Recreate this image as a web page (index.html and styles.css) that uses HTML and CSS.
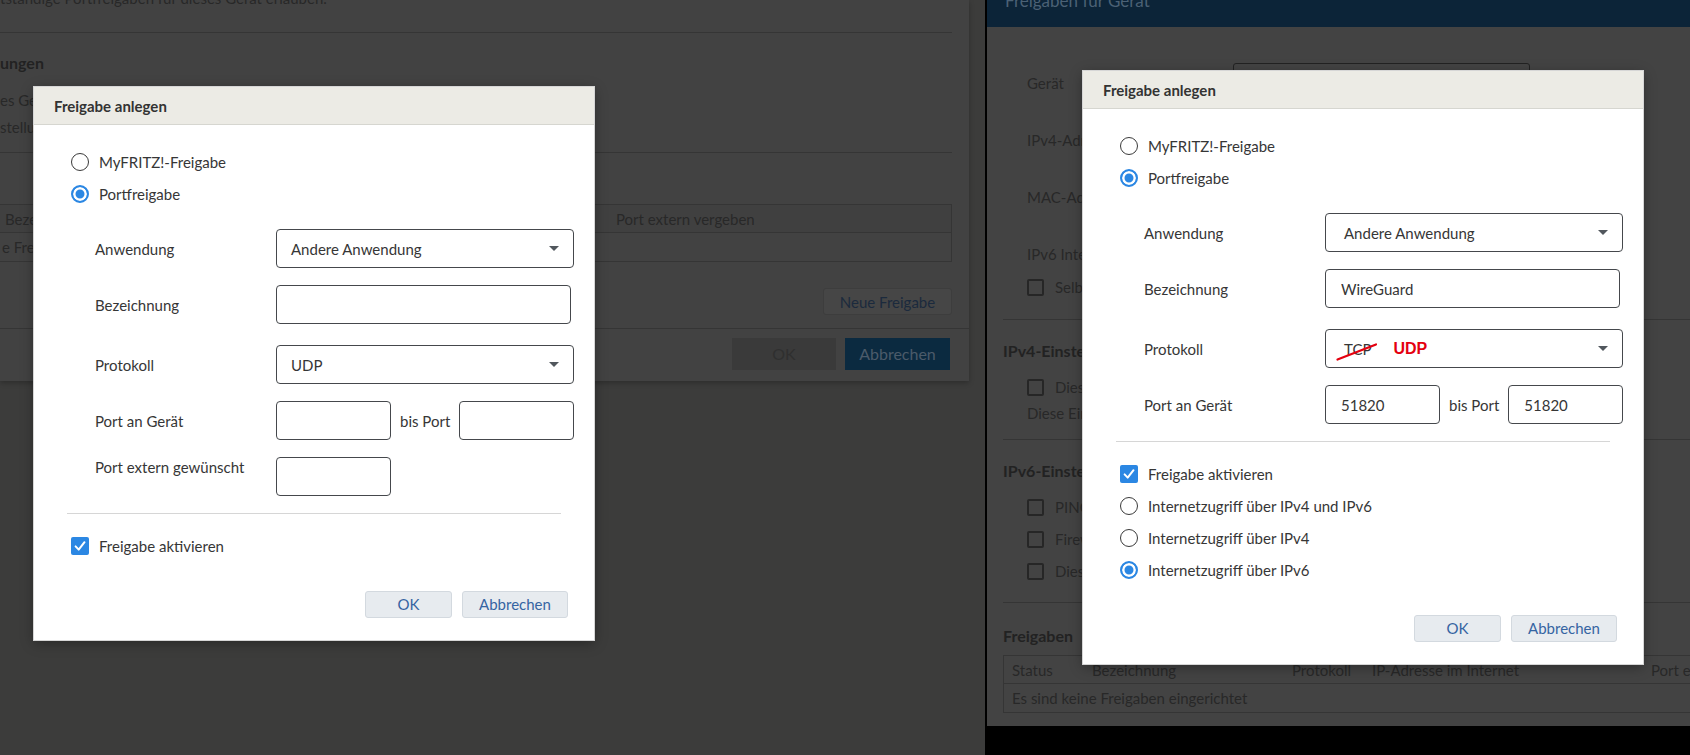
FILE: index.html
```html
<!DOCTYPE html>
<html lang="de">
<head>
<meta charset="utf-8">
<title>Freigaben für Gerät</title>
<link rel="stylesheet" href="styles.css">
</head>
<body>
<main class="screen">

  <!-- Older interface: port sharing page with the create dialog on top -->
  <section class="pane pane-old">
    <div class="page page-old">
      <p class="old-lead">tständige Portfreigaben für dieses Gerät erlauben.</p>
      <hr class="rule rule-lead">
      <h3 class="old-head">ungen</h3>
      <p class="old-line old-line-1">es Gerät komplett freigeben</p>
      <p class="old-line old-line-2">stellung gilt für IPv4.</p>
      <hr class="rule rule-mid">
      <div class="old-table">
        <div class="old-row old-row-head">
          <span class="old-cell old-cell-name">Bezeichnung</span>
          <span class="old-cell">Port extern vergeben</span>
        </div>
        <div class="old-row">
          <span class="old-cell old-cell-empty">e Freigaben</span>
        </div>
      </div>
      <div class="old-actions"><button class="old-btn-new" type="button">Neue Freigabe</button></div>
      <footer class="old-footer">
        <button class="old-btn-ok" type="button">OK</button>
        <button class="old-btn-cancel" type="button">Abbrechen</button>
      </footer>
    </div>

    <div class="dialog dialog-old">
      <div class="dialog-head">Freigabe anlegen</div>
      <div class="dialog-body">
        <div class="options">
          <label class="option"><span class="radio"></span>MyFRITZ!-Freigabe</label>
          <label class="option"><span class="radio is-on"></span>Portfreigabe</label>
        </div>
        <div class="fields">
          <div class="field">
            <span class="field-label">Anwendung</span>
            <div class="select"><span>Andere Anwendung</span><span class="caret"></span></div>
          </div>
          <div class="field field-name">
            <span class="field-label">Bezeichnung</span>
            <input class="input input-wide" type="text" value="">
          </div>
          <div class="field">
            <span class="field-label">Protokoll</span>
            <div class="select"><span>UDP</span><span class="caret"></span></div>
          </div>
          <div class="field">
            <span class="field-label">Port an Gerät</span>
            <input class="input input-port" type="text" value="">
            <span class="bis">bis Port</span>
            <input class="input input-port" type="text" value="">
          </div>
          <div class="field field-top">
            <span class="field-label">Port extern gewünscht</span>
            <input class="input input-port" type="text" value="">
          </div>
        </div>
        <hr class="dialog-rule">
        <div class="options options-after">
          <label class="option"><span class="check"><svg viewBox="0 0 18 18" width="18" height="18"><path d="M4.6 9.4l3.1 3.2 5.8-7.4" fill="none" stroke="#fff" stroke-width="2" stroke-linecap="round" stroke-linejoin="round"/></svg></span>Freigabe aktivieren</label>
        </div>
        <div class="dialog-buttons">
          <button class="btn btn-ok" type="button">OK</button>
          <button class="btn btn-cancel" type="button">Abbrechen</button>
        </div>
      </div>
    </div>
  </section>

  <!-- Newer interface: device sharing page with the create dialog on top -->
  <section class="pane pane-new">
    <div class="page page-new">
      <header class="page-bar"><h2 class="page-title">Freigaben für Gerät</h2></header>
      <div class="page-body">
        <div class="form-row form-row-first"><span class="form-label">Gerät</span><div class="bg-select"></div></div>
        <div class="form-row"><span class="form-label">IPv4-Adresse</span></div>
        <div class="form-row"><span class="form-label">MAC-Adresse</span></div>
        <div class="form-row"><span class="form-label">IPv6 Interface-ID</span></div>
        <div class="bg-check bg-check-self"><span class="bg-box"></span>Selbstständige Portfreigaben</div>
        <hr class="rule rule-new rule-a">
        <h3 class="bg-head bg-head-v4">IPv4-Einstellungen</h3>
        <div class="bg-check bg-check-v4"><span class="bg-box"></span>Dieses Gerät freigeben</div>
        <p class="bg-note">Diese Einstellung gilt für IPv4.</p>
        <hr class="rule rule-new rule-b">
        <h3 class="bg-head bg-head-v6">IPv6-Einstellungen</h3>
        <div class="bg-check bg-check-ping"><span class="bg-box"></span>PING6 freigeben</div>
        <div class="bg-check bg-check-next"><span class="bg-box"></span>Firewall öffnen</div>
        <div class="bg-check bg-check-next"><span class="bg-box"></span>Dieses Gerät freigeben</div>
        <hr class="rule rule-new rule-c">
        <h3 class="bg-head bg-head-list">Freigaben</h3>
        <div class="bg-table">
          <div class="bg-row bg-row-head">
            <span class="bg-cell">Status</span>
            <span class="bg-cell">Bezeichnung</span>
            <span class="bg-cell">Protokoll</span>
            <span class="bg-cell">IP-Adresse im Internet</span>
            <span class="bg-cell">Port extern</span>
          </div>
          <div class="bg-row bg-row-empty">
            <span class="bg-cell">Es sind keine Freigaben eingerichtet</span>
          </div>
        </div>
      </div>
    </div>

    <div class="dialog dialog-new">
      <div class="dialog-head">Freigabe anlegen</div>
      <div class="dialog-body">
        <div class="options">
          <label class="option"><span class="radio"></span>MyFRITZ!-Freigabe</label>
          <label class="option"><span class="radio is-on"></span>Portfreigabe</label>
        </div>
        <div class="fields">
          <div class="field">
            <span class="field-label">Anwendung</span>
            <div class="select"><span>Andere Anwendung</span><span class="caret"></span></div>
          </div>
          <div class="field field-name">
            <span class="field-label">Bezeichnung</span>
            <input class="input input-wide" type="text" value="WireGuard">
          </div>
          <div class="field">
            <span class="field-label">Protokoll</span>
            <div class="select">
              <span class="proto-old">TCP<svg class="strike" viewBox="0 0 42 20" width="42" height="20"><path d="M1.5 17.5 C 14 12.5, 27 7.5, 40 2.5" fill="none" stroke="#e4000f" stroke-width="2.2" stroke-linecap="round"/></svg></span>
              <span class="proto-new">UDP</span>
              <span class="caret"></span>
            </div>
          </div>
          <div class="field">
            <span class="field-label">Port an Gerät</span>
            <input class="input input-port" type="text" value="51820">
            <span class="bis">bis Port</span>
            <input class="input input-port" type="text" value="51820">
          </div>
        </div>
        <hr class="dialog-rule">
        <div class="options options-after">
          <label class="option"><span class="check"><svg viewBox="0 0 18 18" width="18" height="18"><path d="M4.6 9.4l3.1 3.2 5.8-7.4" fill="none" stroke="#fff" stroke-width="2" stroke-linecap="round" stroke-linejoin="round"/></svg></span>Freigabe aktivieren</label>
          <label class="option"><span class="radio"></span>Internetzugriff über IPv4 und IPv6</label>
          <label class="option"><span class="radio"></span>Internetzugriff über IPv4</label>
          <label class="option"><span class="radio is-on"></span>Internetzugriff über IPv6</label>
        </div>
        <div class="dialog-buttons">
          <button class="btn btn-ok" type="button">OK</button>
          <button class="btn btn-cancel" type="button">Abbrechen</button>
        </div>
      </div>
    </div>
  </section>

</main>
</body>
</html>
```

FILE: styles.css
```css
* {
  box-sizing: border-box;
}

html,
body {
  margin: 0;
  height: 100%;
}

body {
  background: #000;
  font-family: Lato, "Open Sans", sans-serif;
  font-size: 15px;
  line-height: 20px;
  color: #363636;
}

button,
input {
  font: inherit;
}

.screen {
  display: flex;
  width: 1690px;
  height: 755px;
  overflow: hidden;
}

.pane {
  position: relative;
  height: 755px;
  overflow: hidden;
}

.pane-old {
  width: 985px;
  flex: none;
  background: #3c3c3b;
}

.pane-new {
  flex: 1;
  background: #000;
}

/* ---------- dimmed page behind the left dialog ---------- */

.page-old {
  width: 969px;
  height: 381px;
  background: #424242;
  color: #282828;
  box-shadow: 0 2px 5px rgba(0, 0, 0, 0.25);
  display: flex;
  flex-direction: column;
  overflow: hidden;
}

.old-lead {
  margin: -12px 0 0;
  white-space: nowrap;
}

.rule {
  border: 0;
  border-top: 1px solid #353535;
  margin: 0;
  height: 0;
}

.rule-lead {
  margin: 24px 17px 0 0;
}

.old-head {
  margin: 20px 0 0;
  font-size: 16px;
  line-height: 20px;
  font-weight: 700;
  color: #222;
}

.old-line {
  margin: 0;
  white-space: nowrap;
}

.old-line-1 {
  margin-top: 17px;
}

.old-line-2 {
  margin-top: 7px;
}

.rule-mid {
  margin: 15px 17px 0 0;
}

.old-table {
  margin: 51px 17px 0 -1px;
  border: 1px solid #353535;
}

.old-row {
  display: grid;
  grid-template-columns: 607px 1fr;
  height: 28px;
  line-height: 28px;
}

.old-row-head {
  border-bottom: 1px solid #353535;
  background: #404040;
}

.old-cell {
  padding: 0 9px;
  white-space: nowrap;
}

.old-cell-name {
  padding-left: 5px;
}

.old-cell-empty {
  padding-left: 2px;
}

.old-actions {
  display: flex;
  justify-content: flex-end;
  margin: 26px 17px 0 0;
}

.old-btn-new {
  width: 129px;
  height: 27px;
  border: 1px solid #3d3d3d;
  border-radius: 3px;
  background: #464646;
  color: #1b2a3d;
  padding: 0;
}

.old-footer {
  display: flex;
  justify-content: flex-end;
  gap: 9px;
  margin-top: 13px;
  padding: 9px 19px 0 0;
  border-top: 1px solid #353535;
}

.old-btn-ok,
.old-btn-cancel {
  height: 32px;
  border: 0;
  padding: 0;
  font-size: 16px;
}

.old-btn-ok {
  width: 104px;
  background: #3a3a3a;
  color: #2f2f2f;
}

.old-btn-cancel {
  width: 105px;
  background: #0b2a40;
  color: #4b5b6a;
}

/* ---------- dimmed page behind the right dialog ---------- */

.page-new {
  margin-left: 2px;
  height: 726px;
  background: #434343;
  color: #282828;
  overflow: hidden;
  box-shadow: -1px 0 4px rgba(0, 0, 0, 0.4);
}

.page-bar {
  height: 27px;
  background: #0c2438;
  overflow: hidden;
}

.page-title {
  margin: -9px 0 0 18px;
  font-size: 17px;
  line-height: 20px;
  font-weight: 400;
  color: #4b6175;
  white-space: nowrap;
}

.page-body {
  padding-left: 16px;
}

.form-row {
  display: flex;
  align-items: center;
  height: 39px;
  margin-top: 18px;
  padding-left: 24px;
}

.form-row-first {
  margin-top: 36px;
}

.form-label {
  width: 206px;
  flex: none;
  white-space: nowrap;
}

.bg-select {
  width: 297px;
  height: 39px;
  border: 1px solid #222;
  border-radius: 3px;
}

.bg-check {
  display: flex;
  align-items: center;
  gap: 11px;
  height: 20px;
  padding-left: 24px;
  white-space: nowrap;
}

.bg-box {
  width: 17px;
  height: 17px;
  flex: none;
  border: 2px solid #262626;
  border-radius: 2px;
}

.bg-check-self {
  margin-top: 4px;
}

.rule-a {
  margin-top: 22px;
}

.bg-head {
  margin: 21px 0 0;
  font-size: 16px;
  line-height: 20px;
  font-weight: 700;
  color: #222;
  white-space: nowrap;
}

.bg-check-v4 {
  margin-top: 16px;
}

.bg-note {
  margin: 6px 0 0;
  padding-left: 24px;
  white-space: nowrap;
}

.rule-b {
  margin-top: 16px;
}

.bg-check-ping {
  margin-top: 16px;
}

.bg-check-next {
  margin-top: 12px;
}

.rule-c {
  margin-top: 21px;
}

.bg-head-list {
  margin-top: 23px;
}

.bg-table {
  margin-top: 9px;
  width: 760px;
  border: 1px solid #353535;
}

.bg-row {
  display: grid;
  grid-template-columns: 80px 200px 80px 279px 1fr;
  height: 28px;
  line-height: 28px;
}

.bg-row-head {
  border-bottom: 1px solid #353535;
}

.bg-row-empty {
  grid-template-columns: 1fr;
}

.bg-cell {
  padding-left: 8px;
  white-space: nowrap;
}

/* ---------- "Freigabe anlegen" dialog ---------- */

.dialog {
  position: absolute;
  width: 560px;
  background: #fff;
  box-shadow: 0 0 0 1px #d6d6d6, 0 3px 12px rgba(0, 0, 0, 0.35);
  color: #363636;
}

.dialog-old {
  top: 87px;
  left: 34px;
}

.dialog-new {
  top: 71px;
  left: 98px;
}

.dialog-head {
  height: 38px;
  padding: 1px 20px 0;
  background: #ecebe5;
  border-bottom: 1px solid #d6d6d0;
  font-weight: 700;
  line-height: 36px;
  color: #333;
}

.dialog-body {
  padding: 21px 33px 22px;
}

.options {
  display: flex;
  flex-direction: column;
}

.option {
  display: flex;
  align-items: center;
  height: 32px;
  padding-left: 4px;
  white-space: nowrap;
}

.radio {
  width: 18px;
  height: 18px;
  flex: none;
  margin-right: 10px;
  border: 1.5px solid #3a3a3a;
  border-radius: 50%;
}

.radio.is-on {
  border: 2px solid #2b87e3;
  background: #2b87e3;
  box-shadow: inset 0 0 0 2.5px #fff;
}

.check {
  width: 18px;
  height: 18px;
  flex: none;
  margin-right: 10px;
  border-radius: 2px;
  background: #2b87e3;
  display: flex;
}

.fields {
  margin-top: 19px;
}

.field {
  display: flex;
  align-items: center;
  padding-left: 28px;
}

.field + .field {
  margin-top: 17px;
}

.field-name + .field {
  margin-top: 21px;
}

.field-top {
  align-items: flex-start;
}

.field-label {
  width: 181px;
  flex: none;
  white-space: nowrap;
}

.select {
  display: flex;
  align-items: center;
  width: 298px;
  height: 39px;
  flex: none;
  padding: 0 14px;
  border: 1px solid #45484c;
  border-radius: 4px;
  white-space: nowrap;
}

.dialog-new .select {
  padding-left: 18px;
}

.caret {
  margin-left: auto;
  width: 0;
  height: 0;
  border-left: 5px solid transparent;
  border-right: 5px solid transparent;
  border-top: 5px solid #51575d;
}

.input {
  height: 39px;
  flex: none;
  padding: 0 15px;
  border: 1px solid #45484c;
  border-radius: 4px;
  color: #363636;
  background: #fff;
  outline: none;
}

.input-wide {
  width: 295px;
}

.input-port {
  width: 115px;
}

.bis {
  margin: 0 9px;
  white-space: nowrap;
}

.proto-old {
  position: relative;
}

/* red correction stroke drawn across the old protocol value */
.strike {
  position: absolute;
  left: -8px;
  top: 3px;
  overflow: visible;
}

.proto-new {
  margin-left: 22px;
  font-family: "Liberation Sans", Arial, sans-serif;
  font-weight: 700;
  font-size: 16px;
  color: #e4000f;
}

.dialog-rule {
  margin: 17px 0 0;
  height: 0;
  border: 0;
  border-top: 1px solid #d6d6d6;
}

.options-after {
  margin-top: 16px;
}

.dialog-buttons {
  display: flex;
  justify-content: flex-end;
  gap: 10px;
  margin: 29px -7px 0 0;
}

.btn {
  height: 27px;
  padding: 0;
  border: 1px solid #d3d9df;
  border-radius: 3px;
  background: #e7ebef;
  color: #3564a2;
  line-height: 25px;
}

.btn-ok {
  width: 87px;
}

.btn-cancel {
  width: 106px;
}
```
